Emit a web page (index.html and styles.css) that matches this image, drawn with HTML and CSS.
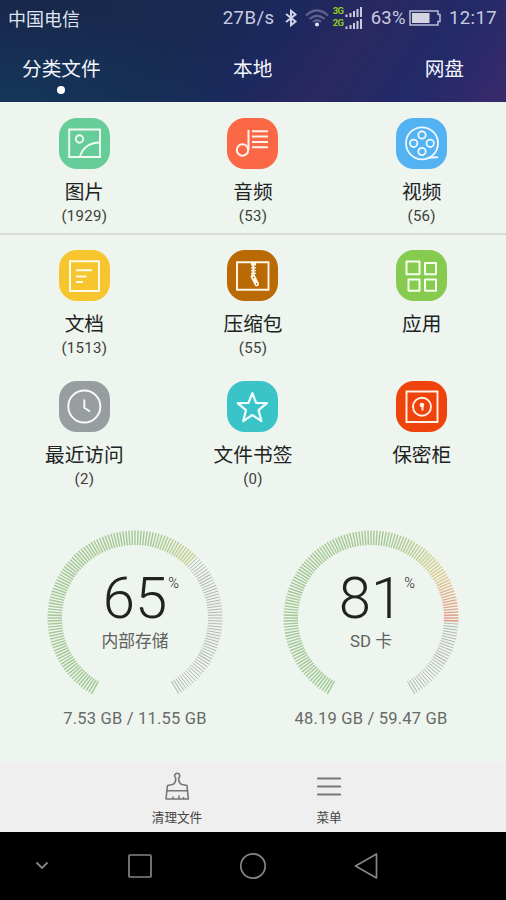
FILE: index.html
```html
<!DOCTYPE html>
<html lang="zh-CN">
<head>
<meta charset="utf-8">
<title>文件管理</title>
<link rel="stylesheet" href="styles.css">
</head>
<body>
<header class="header">
  <div class="status">
    <span class="carrier">中国电信</span>
    <span class="speed">27B/s</span>
    <svg class="bt" width="14" height="18" viewBox="0 0 14 20"><path d="M1.5 5.5 12 14 7 18V2l5 4L1.5 14.5" fill="none" stroke="#d3d6e6" stroke-width="2.2"/></svg>
    <svg class="wifi" width="24" height="18" viewBox="0 0 24 18"><g fill="none" stroke="#5d648c" stroke-width="2.2"><path d="M1 6.5Q12-3.5 23 6.5"/><path d="M4.5 10Q12 3.5 19.500 10"/><path d="M8 13Q12 9.500 16 13"/></g><circle cx="12" cy="15.500" r="2" fill="#e3e5f0"/></svg>
    <span class="nets">
      <span class="net"><b>3G</b><svg width="17" height="12" viewBox="0 0 17 12"><path d="M1.500 12V9.500M5.500 12V8M9 12V6M12.500 12V4M16 12V2" stroke="#c9cce0" stroke-width="2"/></svg></span>
      <span class="net"><b>2G</b><svg width="17" height="12" viewBox="0 0 17 12"><path d="M1.500 12V9.500M5.500 12V8M9 12V6M12.500 12V4M16 12V2" stroke="#c9cce0" stroke-width="2"/></svg></span>
    </span>
    <span class="percent">63%</span>
    <svg class="battery" width="32" height="16" viewBox="0 0 32 16"><path d="M1 1h28v3.500h2v7h-2V15H1z" fill="none" stroke="#b9bdd6" stroke-width="1.500"/><path d="M3 3h17.500v10H3z" fill="#d3d4df"/></svg>
    <span class="time">12:17</span>
  </div>
  <nav class="tabs">
    <span class="tab active">分类文件</span>
    <span class="tab">本地</span>
    <span class="tab">网盘</span>
  </nav>
</header>
<main class="content">
  <section class="row media">
    <div class="item">
      <svg class="icon green" viewBox="0 0 51 51"><g fill="none" stroke="#effbf3" stroke-width="1.900"><path d="M10.200 11.500h30.800v27.500H10.200z"/><circle cx="20.500" cy="21" r="3.700"/><path d="M21 38.500Q25 25 41 24.500"/></g></svg>
      <span class="name">图片</span><span class="count">(1929)</span>
    </div>
    <div class="item">
      <svg class="icon coral" viewBox="0 0 51 51"><g fill="none" stroke="#fff1ec" stroke-width="2"><circle cx="15.500" cy="32" r="5.700"/><path d="M21.500 12v20M25 13.300h16M25 18.500h16M25 24h16M25 29.300h16"/></g></svg>
      <span class="name">音频</span><span class="count">(53)</span>
    </div>
    <div class="item">
      <svg class="icon blue" viewBox="0 0 51 51"><g fill="none" stroke="#f0f9ff" stroke-width="1.800"><circle cx="26" cy="25.300" r="16"/><circle cx="26" cy="17" r="3.700"/><circle cx="26" cy="33.500" r="3.700"/><circle cx="17.700" cy="25.300" r="3.700"/><circle cx="34.200" cy="25.300" r="3.700"/><path d="M31 40.300q4-1.300 11-1"/></g></svg>
      <span class="name">视频</span><span class="count">(56)</span>
    </div>
  </section>
  <section class="row">
    <div class="item">
      <svg class="icon yellow" viewBox="0 0 51 51"><g fill="none" stroke="#fffbe9" stroke-width="2"><path d="M11 11.300h29V41H11z"/><path d="M17 20.300h16M17 26.500h10.500M17 32h7"/></g></svg>
      <span class="name">文档</span><span class="count">(1513)</span>
    </div>
    <div class="item">
      <svg class="icon brown" viewBox="0 0 51 51"><g fill="none" stroke="#fff7e9"><path d="M10 12.300h31.500v27.500H10z" stroke-width="1.900"/><path d="M24 13h5v2.500h-5z" fill="#fff7e9" stroke="none"/><path d="M26.300 13v13.500" stroke-width="2.200"/><path d="M24 17.800h5M24 20.600h5M24 23.400h5" stroke-width="1.200"/><path d="M26 26.500l3.700 7.500" stroke-width="4.600" stroke-linecap="round"/><path d="M26.500 27.500v.2M29.600 33.800v.3" stroke="#b96a05" stroke-width="1.500" stroke-linecap="round"/></g></svg>
      <span class="name">压缩包</span><span class="count">(55)</span>
    </div>
    <div class="item">
      <svg class="icon lime" viewBox="0 0 51 51"><path d="M10.500 11.500h13v12.800h-13zM29 13h11v11.300H29zM12.500 29.500h11v11.300h-11zM29 29.500h11v11.300H29z" fill="none" stroke="#f6ffee" stroke-width="2" stroke-linejoin="round"/></svg>
      <span class="name">应用</span>
    </div>
  </section>
  <section class="row">
    <div class="item">
      <svg class="icon gray" viewBox="0 0 51 51"><g fill="none" stroke="#fafcfc" stroke-width="1.900"><circle cx="25.300" cy="25.500" r="16"/><path d="M25.300 18.500v8.300l5.700 3.700"/></g></svg>
      <span class="name">最近访问</span><span class="count">(2)</span>
    </div>
    <div class="item">
      <svg class="icon teal" viewBox="0 0 51 51"><path d="M25.300 12.200l3.800 9.600 10.900.4-8.400 7 2.800 10.900-9.100-6.100-9.100 6.100L19 29.200l-8.400-7 10.900-.4z" fill="none" stroke="#f0ffff" stroke-width="2.200" stroke-linejoin="round"/></svg>
      <span class="name">文件书签</span><span class="count">(0)</span>
    </div>
    <div class="item">
      <svg class="icon red" viewBox="0 0 51 51"><g fill="none" stroke="#fff2e8" stroke-width="1.900"><path d="M10.500 10.500h31V41h-31z"/><circle cx="26" cy="25.700" r="9"/></g><circle cx="26" cy="24" r="2.300" fill="#fff2e8"/><path d="M26.500 24v5.500" stroke="#fff2e8" stroke-width="2"/></svg>
      <span class="name">保密柜</span>
    </div>
  </section>
  <section class="storage">
    <div class="gauge">
      <svg class="dial" viewBox="-90 -90 180 180" data-percent="65"></svg>
      <div class="reading"><span class="value">65<sup>%</sup></span><span class="label">内部存储</span></div>
      <span class="usage">7.53 GB / 11.55 GB</span>
    </div>
    <div class="gauge">
      <svg class="dial" viewBox="-90 -90 180 180" data-percent="81"></svg>
      <div class="reading"><span class="value">81<sup>%</sup></span><span class="label">SD 卡</span></div>
      <span class="usage">48.19 GB / 59.47 GB</span>
    </div>
  </section>
</main>
<footer class="toolbar">
  <div class="tool">
    <svg width="26" height="30" viewBox="0 0 26 30"><g fill="none" stroke="#777" stroke-width="1.600" stroke-linejoin="round"><path d="M11.700 7a2.600 2.600 0 1 1 3 0Q14.500 12 18 13.500l5 1 1.300 13.500H2L3.500 14.500l5-1Q12 12 11.700 7z"/><path d="M3 19.800h20.500M9 28v-2.500M15 28v-3.500M19.500 28v-2"/></g></svg>
    <span>清理文件</span>
  </div>
  <div class="tool">
    <svg width="26" height="30" viewBox="0 0 26 30"><path d="M2 7.500h22M2 15.500h22M2 23.500h22" stroke="#777" stroke-width="2.200" stroke-linecap="round"/></svg>
    <span>菜单</span>
  </div>
</footer>
<div class="navbar">
  <svg width="14" height="10" viewBox="0 0 14 10"><path d="M1.500 1.500 7 7l5.500-5.500" fill="none" stroke="#858585" stroke-width="1.800"/></svg>
  <svg width="26" height="26" viewBox="0 0 26 26"><rect x="2" y="2" width="22" height="22" rx="1" fill="none" stroke="#858585" stroke-width="1.700"/></svg>
  <svg width="28" height="28" viewBox="0 0 28 28"><circle cx="14" cy="14" r="12.200" fill="none" stroke="#858585" stroke-width="1.700"/></svg>
  <svg width="26" height="28" viewBox="0 0 26 28"><path d="M23.500 2v24L2.500 14z" fill="none" stroke="#858585" stroke-width="1.700" stroke-linejoin="round"/></svg>
</div>
<script src="dial.js"></script>
</body>
</html>
```
FILE: styles.css
```css
* { box-sizing: border-box; }
body {
  margin: 0;
  width: 506px;
  height: 900px;
  overflow: hidden;
  display: flex;
  flex-direction: column;
  background: #eef4ee;
  font-family: Roboto, "Noto Sans CJK SC", sans-serif;
  color: #20231f;
}
svg { display: block; flex: none; }
.header {
  height: 102px;
  flex: none;
  color: #f2f5fb;
  background:
    radial-gradient(ellipse 260px 90px at 0 100%, rgba(18, 64, 98, .6), transparent),
    linear-gradient(125deg, #18284c 0%, #18294f 35%, #1b285e 52%, #2a2860 66%, #222a68 82%, #3a2a6c 100%);
}
.status {
  height: 36px;
  display: flex;
  align-items: center;
  padding: 0 9px 0 8px;
  font-size: 18.500px;
  color: #c9cce0;
}
.carrier { font-size: 18px; color: #dfe4ee; margin-right: auto; }
.speed { letter-spacing: .5px; }
.bt { margin-left: 9px; }
.wifi { margin-left: 7px; }
.nets { display: flex; flex-direction: column; margin-left: 4px; margin-top: -3px; }
.net { display: flex; align-items: center; height: 12px; }
.net b { width: 12px; font-size: 9.500px; line-height: 12px; color: #8ccc1e; letter-spacing: -.5px; }
.percent { margin-left: 9px; letter-spacing: .3px; }
.battery { margin-left: 3px; }
.time { margin-left: 8px; letter-spacing: .4px; }
.tabs { display: flex; justify-content: space-between; padding: 19px 42px 0 22px; font-size: 19.700px; line-height: 30px; }
.tab { position: relative; }
.tab:nth-child(2) { margin-left: -20px; }
.tab.active::after {
  content: "";
  position: absolute;
  left: 50%;
  top: 31px;
  width: 8px;
  height: 8px;
  margin-left: -4px;
  border-radius: 50%;
  background: #fff;
}
.content { height: 660px; flex: none; }
.row { height: 131.500px; padding-top: 15px; display: grid; grid-template-columns: repeat(3, 1fr); }
.media { height: 132.500px; padding-top: 16px; border-bottom: 2px solid #d6dbd7; }
.item { display: flex; flex-direction: column; align-items: center; }
.icon { width: 51px; height: 51px; border-radius: 18px; }
.green { background: #66cd99; }
.coral { background: #fa6845; }
.blue { background: #53b2f1; }
.yellow { background: #f7c52d; }
.brown { background: #b96a05; }
.lime { background: #86ca50; }
.gray { background: #989da0; }
.teal { background: #3bc4c8; }
.red { background: #ee430a; }
.name { font-size: 19.700px; line-height: 26px; margin-top: 11px; }
.count { font-size: 15px; line-height: 20px; letter-spacing: .3px; color: #3b3f3b; }
.storage { display: flex; justify-content: space-between; padding: 30px 45px 0; }
.gauge { width: 180px; display: grid; justify-items: center; }
.dial { width: 180px; height: 180px; grid-area: 1 / 1; }
.reading { grid-area: 1 / 1; display: flex; flex-direction: column; align-items: center; padding-top: 40px; }
.value { position: relative; font-size: 58px; line-height: 60px; font-weight: 300; }
.value sup { position: absolute; left: calc(100% + 1px); top: 7px; font-size: 14.500px; line-height: 18px; font-weight: 300; }
.label { font-size: 16.800px; line-height: 24px; margin-top: 1px; color: #5d625d; }
.usage { font-size: 16.500px; line-height: 20px; margin-top: 1px; color: #666b66; letter-spacing: .2px; }
.toolbar { height: 70px; flex: none; background: #efefef; display: flex; justify-content: center; }
.tool { width: 152px; display: flex; flex-direction: column; align-items: center; padding-top: 9px; font-size: 12.600px; line-height: 18px; color: #444; }
.tool span { margin-top: 8px; }
.navbar { height: 68px; flex: none; background: #000; display: flex; align-items: center; padding-left: 35px; }
.navbar svg:nth-child(2) { margin-left: 78px; }
.navbar svg:nth-child(3) { margin-left: 86px; }
.navbar svg:nth-child(4) { margin-left: 86px; }
```
FILE: dial.js
```js
// Draws 151 ticks over a 300 degree arc, coloured up to the used share.
function mix(a, b, t) {
  return 'rgb(' + a.map((v, i) => Math.round(v + (b[i] - v) * t)).join(',') + ')';
}
const stops = [[0, [160, 200, 148]], [0.54, [164, 200, 148]], [0.66, [208, 210, 145]], [0.7, [222, 204, 145]], [0.76, [228, 168, 138]], [0.82, [228, 144, 128]]];
function colour(p) {
  for (let i = 1; i < stops.length; i++) {
    if (p <= stops[i][0]) {
      return mix(stops[i - 1][1], stops[i][1], (p - stops[i - 1][0]) / (stops[i][0] - stops[i - 1][0]));
    }
  }
}
function tick(dial, angle, stroke, width) {
  const line = document.createElementNS('http://www.w3.org/2000/svg', 'line');
  line.setAttribute('y1', -73);
  line.setAttribute('y2', -87.5);
  line.setAttribute('transform', 'rotate(' + angle + ')');
  line.setAttribute('stroke', stroke);
  line.setAttribute('stroke-width', width);
  dial.appendChild(line);
}
document.querySelectorAll('.dial').forEach((dial) => {
  const used = Number(dial.dataset.percent) / 100;
  for (let i = 0; i <= 150; i++) {
    const p = i / 150;
    const angle = -150 + i * 2;
    if (p <= used) {
      tick(dial, angle, colour(p), 1.4);
    } else {
      tick(dial, angle, '#afb4af', 0.9);
    }
  }
});
```
